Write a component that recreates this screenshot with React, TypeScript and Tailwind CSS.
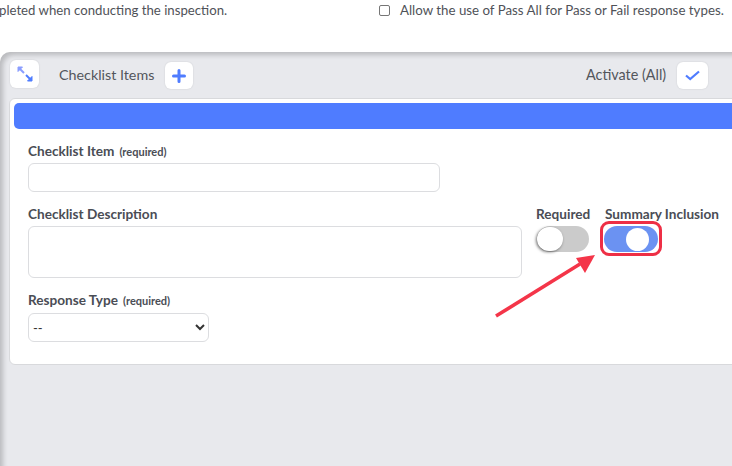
export default function App() {
  return (
    <div className="relative w-[732px] h-[466px] overflow-hidden bg-white font-['Lato',sans-serif] text-[#4a4d55]">
      <div className="flex h-[52px] items-start pt-[2px] text-[13.3px] leading-[17px] text-[#4f5258]">
        <span className="ml-[-1px] w-[380px] text-[13.2px]">pleted when conducting the inspection.</span>
        <span className="mt-[3px] h-[11px] w-[11px] rounded-[2px] border border-[#767676] bg-white" />
        <span className="ml-[10px] whitespace-nowrap">Allow the use of Pass All for Pass or Fail response types.</span>
      </div>
      <div className="h-[414px] rounded-tl-[10px] bg-[#e8e9ed] pl-[10px] shadow-[inset_4px_4px_5px_-1px_rgba(0,0,0,0.2)]">
        <div className="flex h-[46px] items-start pt-[8px]">
          <button className="flex h-[28px] w-[29px] items-center justify-center rounded-[6px] bg-white shadow-[0_0_2px_rgba(0,0,0,0.12)]">
            <svg width="18" height="18" viewBox="0 0 18 18" fill="none">
              <path d="M2 6.5V2h4.5z" fill="#8a9dff" stroke="#8a9dff" strokeWidth="1" />
              <path d="M3.5 3.5L8 8" stroke="#8a9dff" strokeWidth="2" />
              <path d="M16 11.5V16h-4.5z" fill="#4f7cff" stroke="#4f7cff" strokeWidth="1" />
              <path d="M14.5 14.5L10 10" stroke="#4f7cff" strokeWidth="2" />
            </svg>
          </button>
          <span className="ml-[20px] mt-[6px] w-[106px] text-[14.3px] leading-[17px] text-[#53565c]">Checklist Items</span>
          <button className="mt-[2px] flex h-[27px] w-[28px] items-center justify-center rounded-[6px] bg-white shadow-[0_0_2px_rgba(0,0,0,0.12)]">
            <svg width="14" height="14" viewBox="0 0 14 14"><path d="M7 1.5v11M1.5 7h11" stroke="#4f7cff" strokeWidth="3" strokeLinecap="round" /></svg>
          </button>
          <span className="ml-[393px] mt-[6px] w-[91px] text-[14.4px] leading-[17px] text-[#53565c]">Activate (All)</span>
          <button className="mt-[2px] flex h-[27px] w-[31px] items-center justify-center rounded-[6px] bg-white shadow-[0_0_2px_rgba(0,0,0,0.12)]">
            <svg width="15" height="11" viewBox="0 0 15 11" fill="none"><path d="M1 5.5l4.2 3.6L14 1.5" stroke="#4f7cff" strokeWidth="2.2" /></svg>
          </button>
        </div>
        <div className="ml-[-1px] h-[267px] w-[741px] rounded-[6px] border border-[#d8d9dc] bg-white pl-[4px] pt-[4px]">
          <div className="h-[26px] rounded-l-[5px] bg-[#4f7cff]" />
          <div className="pl-[14px]">
            <div className="mt-[14px] flex h-[17px] items-baseline text-[13.6px] leading-[17px] font-bold text-[#4a4d55]">
              Checklist Item<span className="ml-[5px] text-[11px]">(required)</span>
            </div>
            <input className="mt-[3px] block h-[29px] w-[412px] rounded-[6px] border border-[#dcdde0] bg-white" />
            <div className="mt-[14px] flex">
              <div className="w-[508px]">
                <div className="h-[17px] text-[13.6px] leading-[17px] font-bold">Checklist Description</div>
                <textarea className="mt-[3px] block h-[52px] w-[494px] resize-none rounded-[6px] border border-[#dcdde0] bg-white" />
              </div>
              <div className="w-[68px]">
                <div className="h-[17px] text-[13.6px] leading-[17px] font-bold whitespace-nowrap">Required</div>
                <div className="ml-[1px] mt-[3px] flex h-[26px] w-[52px] items-center rounded-full bg-[#cbcbcb]">
                  <span className="h-[24px] w-[26px] rounded-full bg-white shadow-[-1px_1px_3px_rgba(0,0,0,0.55)]" />
                </div>
              </div>
              <div>
                <div className="ml-[1px] h-[17px] text-[13.6px] leading-[17px] font-bold whitespace-nowrap">Summary Inclusion</div>
                <div className="mt-[3px] flex h-[26px] w-[54px] items-center justify-end rounded-full bg-[#6b92f2] pr-[9px]">
                  <span className="h-[23px] w-[23px] rounded-full bg-white" />
                </div>
              </div>
            </div>
            <div className="mt-[14px] flex h-[17px] items-baseline text-[13.6px] leading-[17px] font-bold">
              Response Type<span className="ml-[5px] text-[11px]">(required)</span>
            </div>
            <select className="mt-[4px] block h-[29px] w-[181px] rounded-[6px] border border-[#dcdde0] bg-white pl-0 text-[13px] text-[#333]">
              <option>--</option>
            </select>
          </div>
        </div>
      </div>
      <div className="absolute left-[600px] top-[221px] h-[35px] w-[62px] rounded-[9px] border-[3px] border-[#ee2f45]" />
      <svg className="absolute left-[490px] top-[250px]" width="112" height="72" viewBox="0 0 112 72" fill="none">
        <path d="M6 66L90 14" stroke="#f43549" strokeWidth="3.5" />
        <path d="M105 5L86 8L95 23Z" fill="#f43549" />
      </svg>
    </div>
  );
}
